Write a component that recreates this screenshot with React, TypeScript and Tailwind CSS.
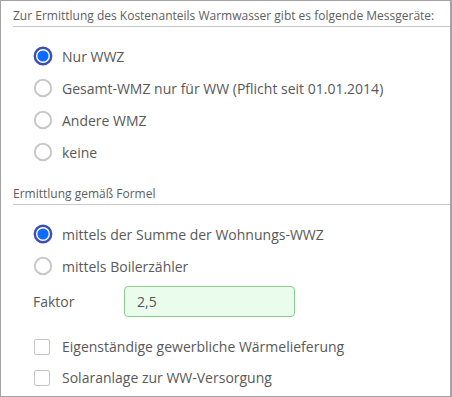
import { useState } from 'react';

const FONT = { fontFamily: '"Open Sans", "Liberation Sans", sans-serif' };

export default function App() {
  const [meter, setMeter] = useState('nur');
  const [formula, setFormula] = useState('summe');
  const [factor, setFactor] = useState('2,5');
  const [gewerblich, setGewerblich] = useState(false);
  const [solar, setSolar] = useState(false);

  return (
    <div
      className="w-[452px] h-[397px] bg-white border-t border-l border-b border-r-2 border-[#a3a3a3] text-[#595959] overflow-hidden"
      style={FONT}
    >
      <Legend>Zur Ermittlung des Kostenanteils Warmwasser gibt es folgende Messgeräte:</Legend>
      <div className="mt-[13px] pl-[32px]">
        <Radio checked={meter === 'nur'} onClick={() => setMeter('nur')} label="Nur WWZ" />
        <Radio checked={meter === 'gesamt'} onClick={() => setMeter('gesamt')} label="Gesamt-WMZ nur für WW (Pflicht seit 01.01.2014)" />
        <Radio checked={meter === 'andere'} onClick={() => setMeter('andere')} label="Andere WMZ" />
        <Radio checked={meter === 'keine'} onClick={() => setMeter('keine')} label="keine" />
      </div>

      <div className="mt-[11px]">
        <Legend>Ermittlung gemäß Formel</Legend>
      </div>
      <div className="mt-[13px] pl-[32px]">
        <Radio checked={formula === 'summe'} onClick={() => setFormula('summe')} label="mittels der Summe der Wohnungs-WWZ" />
        <Radio checked={formula === 'boiler'} onClick={() => setFormula('boiler')} label="mittels Boilerzähler" />

        <div className="flex items-center h-[31px] mt-[4px]">
          <span className="w-[91px] text-[14px]">Faktor</span>
          <input
            value={factor}
            onChange={(e) => setFactor(e.target.value)}
            className="w-[171px] h-[31px] rounded-[4px] border border-[#8dcf8f] bg-[#eafceb] px-[12px] text-[14px] text-[#555] outline-none"
            style={FONT}
          />
        </div>

        <div className="mt-[14px]">
          <Checkbox checked={gewerblich} onClick={() => setGewerblich(!gewerblich)} label="Eigenständige gewerbliche Wärmelieferung" />
          <Checkbox checked={solar} onClick={() => setSolar(!solar)} label="Solaranlage zur WW-Versorgung" />
        </div>
      </div>
    </div>
  );
}

function Legend({ children }: { children: React.ReactNode }) {
  return (
    <div className="ml-[12px] pt-[7px] pb-[2px] border-b border-[#c9c9c9] text-[12px] leading-[16px] text-[#5e5e5e] whitespace-nowrap">
      {children}
    </div>
  );
}

function Radio({ checked, onClick, label }: { checked: boolean; onClick: () => void; label: string }) {
  return (
    <div className="flex items-center h-[32px] cursor-pointer" onClick={onClick}>
      <svg width="20" height="20" viewBox="0 0 20 20" className="shrink-0">
        {checked ? (
          <>
            <circle cx="10" cy="10" r="8.2" fill="white" stroke="#3d4cb8" strokeWidth="2.4" />
            <circle cx="10" cy="10" r="5.6" fill="#0b6cff" />
          </>
        ) : (
          <circle cx="10" cy="10" r="8.2" fill="white" stroke="#c8c8c8" strokeWidth="2" />
        )}
      </svg>
      <span className="ml-[9px] text-[14px] whitespace-nowrap">{label}</span>
    </div>
  );
}

function Checkbox({ checked, onClick, label }: { checked: boolean; onClick: () => void; label: string }) {
  return (
    <div className="flex items-center h-[31px] cursor-pointer" onClick={onClick}>
      <div className="w-[16px] h-[16px] ml-[1px] rounded-[2px] border border-[#c4c4c4] bg-white flex items-center justify-center">
        {checked && <span className="text-[11px] text-[#0b6cff]">✓</span>}
      </div>
      <span className="ml-[12px] text-[14px] whitespace-nowrap">{label}</span>
    </div>
  );
}
